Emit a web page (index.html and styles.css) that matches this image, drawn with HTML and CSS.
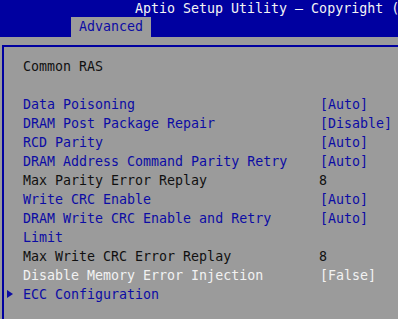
FILE: index.html
```html
<!DOCTYPE html>
<html lang="en">

<head>
    <meta charset="UTF-8">
    <meta name="viewport" content="width=device-width, initial-scale=1.0">
    <title>Aptio Setup Utility</title>
    <link rel="stylesheet" href="styles.css">
</head>

<body>
    <div class="header">
        <div class="title">Aptio Setup Utility – Copyright (C) 2021 American Megatrends, Inc.</div>
        <div class="tabs">
            <div class="tab">Advanced</div>
        </div>
    </div>

    <div class="panel">
        <div class="row"><span class="label plain">Common RAS</span></div>
        <div class="row"></div>
        <div class="row"><span class="label">Data Poisoning</span><span class="value">[Auto]</span></div>
        <div class="row"><span class="label">DRAM Post Package Repair</span><span class="value">[Disable]</span></div>
        <div class="row"><span class="label">RCD Parity</span><span class="value">[Auto]</span></div>
        <div class="row"><span class="label">DRAM Address Command Parity Retry</span><span class="value">[Auto]</span></div>
        <div class="row"><span class="label plain">Max Parity Error Replay</span><span class="value plain num">8</span></div>
        <div class="row"><span class="label">Write CRC Enable</span><span class="value">[Auto]</span></div>
        <div class="row"><span class="label">DRAM Write CRC Enable and Retry</span><span class="value">[Auto]</span></div>
        <div class="row"><span class="label">Limit</span></div>
        <div class="row"><span class="label plain">Max Write CRC Error Replay</span><span class="value plain num">8</span></div>
        <div class="row selected"><span class="label">Disable Memory Error Injection</span><span class="value">[False]</span></div>
        <div class="row"><span class="label submenu">ECC Configuration</span></div>
    </div>
</body>

</html>
```

FILE: styles.css
```css
body {
    margin: 0;
    background-color: #9b9b9b;
    font-family: "DejaVu Sans Mono", monospace;
    font-size: 13.3px;
    line-height: 19px;
    color: #0c0ca4;
    overflow: hidden;
    height: 319px;
}

.header {
    background-color: #0000a0;
    height: 37px;
}

.title {
    height: 17px;
    line-height: 18px;
    padding-left: 135px;
    color: #f4f4f4;
    white-space: nowrap;
    overflow: hidden;
}

.tabs {
    display: flex;
    padding-left: 71px;
}

.tab {
    width: 72px;
    height: 20px;
    line-height: 20px;
    padding-left: 8px;
    background-color: #9b9b9b;
    color: #0c0ca4;
}

.panel {
    margin: 8px 0 0 2px;
    border-top: 2px solid #0000a0;
    border-left: 2px solid #0000a0;
    padding: 10px 0 0 19px;
    height: 262px;
    overflow: hidden;
}

.row {
    display: grid;
    grid-template-columns: 297px auto;
    height: 19px;
    white-space: nowrap;
}

.plain {
    color: #101010;
}

.selected .label,
.selected .value {
    color: #f2f2f2;
}

.num {
    margin-left: -1px;
}

.submenu {
    position: relative;
}

.submenu::before {
    content: "";
    position: absolute;
    left: -16px;
    top: 5px;
    border-left: 6px solid #0c0ca4;
    border-top: 4px solid transparent;
    border-bottom: 4px solid transparent;
}
```
